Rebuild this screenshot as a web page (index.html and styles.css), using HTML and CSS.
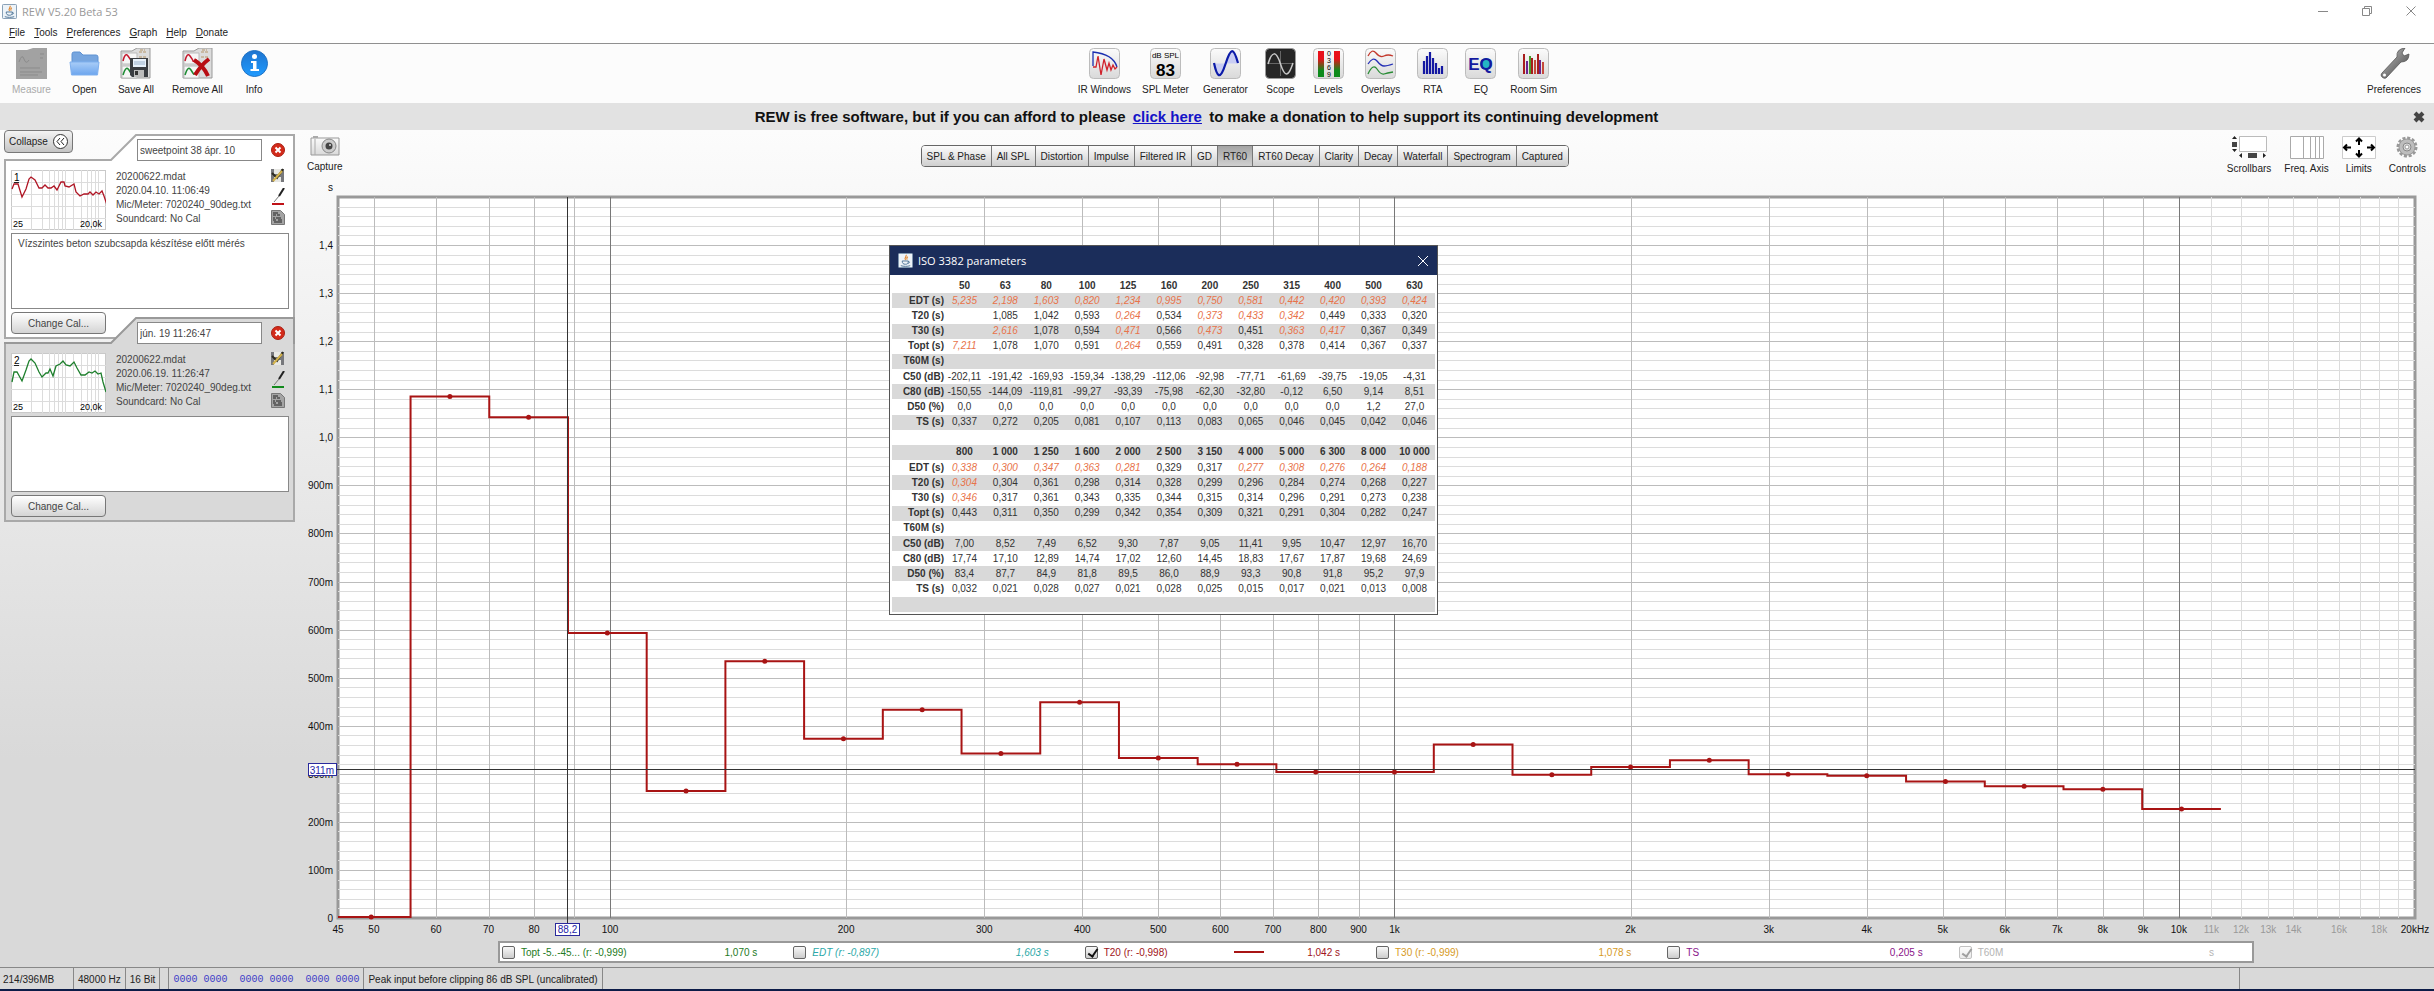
FILE: index.html
```html
<!DOCTYPE html>
<html lang="en">
<head>
    <meta charset="UTF-8">
    <meta name="viewport" content="width=device-width, initial-scale=1.0">
    <title>REW V5.20 Beta 53</title>
    <link rel="stylesheet" href="styles.css">
</head>
<body>
    <!-- shared icons -->
    <svg class="defs" width="0" height="0">
        <defs>
            <linearGradient id="gFolder" x1="0" y1="0" x2="0" y2="1"><stop offset="0" stop-color="#a9cdf7"/><stop offset="1" stop-color="#6ca5ee"/></linearGradient>
            <linearGradient id="gInfo" x1="0" y1="0" x2="0" y2="1"><stop offset="0" stop-color="#1f74cf"/><stop offset="1" stop-color="#1f9bff"/></linearGradient>
            <linearGradient id="gTile" x1="0" y1="0" x2="0" y2="1"><stop offset="0" stop-color="#fbfbfb"/><stop offset="1" stop-color="#d9d9d9"/></linearGradient>
            <linearGradient id="gLevel" x1="0" y1="0" x2="0" y2="1"><stop offset="0.3" stop-color="#e8111a"/><stop offset="0.75" stop-color="#0d8a1c"/></linearGradient>
            <linearGradient id="gMetal" x1="0" y1="0" x2="1" y2="1"><stop offset="0" stop-color="#c8c8c8"/><stop offset="1" stop-color="#3c3c3c"/></linearGradient>
            <symbol id="java" viewBox="0 0 16 16">
                <rect x="0.5" y="0.5" width="15" height="15" rx="1" fill="#edf3f8" stroke="#7f98b0"/>
                <path d="M8.5 2c1.500 2-2.500 2.500-0.500 5.500M10.500 4c-2 1.200-1 2-0.800 3" fill="none" stroke="#e0852c" stroke-width="1.200"/>
                <path d="M4.500 8.500h6.500c0 3-1 3.500-3.200 3.500s-3.300-1-3.300-3.500zM11 9c2 0 1.500 2-0.500 2M3 13.500c3 1 7 1 10 0" fill="none" stroke="#4d7396"/>
            </symbol>
            <symbol id="files" viewBox="0 0 31 31">
                <path d="M1 3h11l5-3h13v30h-29z" fill="#dcdcdc" stroke="#9a9a9a"/>
                <path d="M2 5h15v11h-15zM2 18h15v12h-15z" fill="#f6f6f6" stroke="#bbb"/>
                <path d="M19 4h8M19 9h8M20 2h5" stroke="#b5966b" stroke-dasharray="3 1"/>
                <path d="M3 13q2-9 5-5t3 5 4-1" fill="none" stroke="#c4172c" stroke-width="1.500"/>
                <path d="M3 27q3-10 6-5t3 4 4-1" fill="none" stroke="#1d8b33" stroke-width="1.500"/>
            </symbol>
            <symbol id="delete" viewBox="0 0 14 14">
                <circle cx="7" cy="7" r="6.500" fill="#d32a1a" stroke="#a91f12"/>
                <path d="M4.500 4.500l5 5M9.500 4.500l-5 5" stroke="#fff" stroke-width="2"/>
            </symbol>
            <symbol id="save" viewBox="0 0 15 15">
                <path d="M1 1h13v13h-13z" fill="#77787c"/>
                <path d="M4 1h7v5h-7zM4 9h7v5h-7z" fill="#e8e8e4"/>
                <path d="M2 5l5 5 6-9" fill="none" stroke="#2e2c22" stroke-width="2"/>
                <path d="M3 13l9-10" stroke="#d3b24a" stroke-width="2"/>
            </symbol>
            <symbol id="pen" viewBox="0 0 14 16">
                <path d="M13 0L8 8" stroke="#222" stroke-width="2"/>
                <path d="M8 8L3 14" stroke="#777"/>
            </symbol>
            <symbol id="sheet" viewBox="0 0 14 15">
                <path d="M0.500 0.500h9l4 4v10h-13z" fill="#a4a4a4" stroke="#777"/>
                <path d="M2 3h5M2 5h3M6 5h3M2 8h2M5 8h5M2 10h3M7 10h4M3 12h8" stroke="#222"/>
            </symbol>
        </defs>
    </svg>

    <div class="app">
        <header class="titlebar">
            <svg class="title-icon" viewBox="0 0 16 16"><use href="#java"/></svg>
            <span class="title-text">REW V5.20 Beta 53</span>
            <div class="window-buttons">
                <button aria-label="Minimize"><svg width="12" height="12" viewBox="0 0 12 12"><path d="M1 6.500h10"/></svg></button>
                <button aria-label="Restore"><svg width="12" height="12" viewBox="0 0 12 12"><path d="M1.500 3.500h7v7h-7zM3.500 3.500v-2h7v7h-2"/></svg></button>
                <button aria-label="Close"><svg width="12" height="12" viewBox="0 0 12 12"><path d="M1.500 1.500l9 9M10.500 1.500l-9 9"/></svg></button>
            </div>
        </header>

        <nav class="menubar">
            <button><u>F</u>ile</button>
            <button><u>T</u>ools</button>
            <button><u>P</u>references</button>
            <button><u>G</u>raph</button>
            <button><u>H</u>elp</button>
            <button><u>D</u>onate</button>
        </nav>

        <div class="toolbar">
            <div class="tool-group">
                <button class="tool" disabled>
                    <svg width="31" height="31" viewBox="0 0 31 31"><path d="M0 2h11l6-2h14v31h-31z" fill="#a2a2a2"/><path d="M3 14q3-9 5-3t5 1M4 20h20M4 24h22M4 27h18M24 6h4M24 10h3" fill="none" stroke="#8b8b8b"/></svg>
                    <span>Measure</span>
                </button>
                <button class="tool">
                    <svg width="31" height="31" viewBox="0 0 31 31"><path d="M3 16V6q0-2 2-2h6l3 3h13q2 0 2 2v7z" fill="#77a6df" stroke="#5f92d2"/><path d="M1 14h29l-1.500 13h-26z" fill="url(#gFolder)" stroke="#7fb0ee"/></svg>
                    <span>Open</span>
                </button>
                <button class="tool">
                    <svg width="31" height="31" viewBox="0 0 31 31"><use href="#files"/><path d="M10 10h18v19h-16l-2-2z" fill="#3a3d42"/><path d="M13 11h13v8h-13z" fill="#e9f2fc"/><path d="M14 14h11M14 16h11" stroke="#9cb3cc"/><path d="M14 22h10v7h-10z" fill="#bcbcbc"/><path d="M15 23h3v4h-3z" fill="#333"/></svg>
                    <span>Save All</span>
                </button>
                <button class="tool">
                    <svg width="31" height="31" viewBox="0 0 31 31"><use href="#files"/><path d="M12 12q9 5 14 16M27 11q-8 6-14 16" fill="none" stroke="#b80d13" stroke-width="4"/></svg>
                    <span>Remove All</span>
                </button>
                <button class="tool">
                    <svg width="27" height="31" viewBox="0 0 27 31"><circle cx="13.500" cy="15.500" r="13" fill="url(#gInfo)" stroke="#2273c4"/><circle cx="13.500" cy="8.500" r="2.500" fill="#fff"/><path d="M10 13h5.500v8h2.500v2h-8.500v-2h2.500v-6h-2z" fill="#fff"/></svg>
                    <span>Info</span>
                </button>
            </div>

            <div class="tool-group tool-group-tight">
                <button class="tool">
                    <svg width="31" height="31" viewBox="0 0 31 31"><rect class="tile" x="0.500" y="0.500" width="30" height="30" rx="4"/><path d="M4 18V4q20 2 24 15" fill="none" stroke="#1b2fb0" stroke-width="1.300"/><path d="M4 19h3L9 8l3 19 3-16 3 11 2-7 2 7 2-5 2 4 2-2" fill="none" stroke="#d0222c" stroke-width="1.300"/></svg>
                    <span>IR Windows</span>
                </button>
                <button class="tool">
                    <svg width="31" height="31" viewBox="0 0 31 31"><rect class="tile" x="0.500" y="0.500" width="30" height="30" rx="4"/><text class="spl-unit" x="15.500" y="10">dB SPL</text><text class="spl-value" x="15.500" y="28">83</text></svg>
                    <span>SPL Meter</span>
                </button>
                <button class="tool spaced">
                    <svg width="31" height="31" viewBox="0 0 31 31"><rect class="tile" x="0.500" y="0.500" width="30" height="30" rx="4"/><path d="M4 15.500h11.500c-3 15-8 17-11.500 0zM15.500 15.500C19 0 24-1 28 15.500z" fill="#c9cdf3"/><path d="M4 15c3 14 6 18 11.500 1s8-17 12.500-1" fill="none" stroke="#0c1ba8" stroke-width="2.200"/></svg>
                    <span>Generator</span>
                </button>
                <button class="tool spaced">
                    <svg width="31" height="31" viewBox="0 0 31 31"><rect x="0.500" y="0.500" width="30" height="30" rx="4" fill="#262626" stroke="#999"/><path d="M15.500 3v25M3 15.500h25" stroke="#666"/><path d="M3 16c4-13 8-14 12.500 0s8 13 12.500-1" fill="none" stroke="#c9c9c9" stroke-width="1.500"/></svg>
                    <span>Scope</span>
                </button>
                <button class="tool spaced">
                    <svg width="31" height="31" viewBox="0 0 31 31"><rect class="tile" x="0.500" y="0.500" width="30" height="30" rx="4"/><path d="M5 3h6v26h-6zM21 3h6v26h-6z" fill="url(#gLevel)"/><text class="level-mark" x="16" y="8">0</text><text class="level-mark" x="16" y="15">3</text><text class="level-mark" x="16" y="22">6</text><text class="level-mark" x="16" y="29">9</text></svg>
                    <span>Levels</span>
                </button>
                <button class="tool spaced">
                    <svg width="31" height="31" viewBox="0 0 31 31"><rect class="tile" x="0.500" y="0.500" width="30" height="30" rx="4"/><g fill="none" stroke-width="1.300"><path d="M3 8q4-8 8-3t8 3 9 0" stroke="#c3392d"/><path d="M3 16q5-8 9-3t7 5 9-2" stroke="#2530b5"/><path d="M3 26q5-11 9-5t7 5 9-2" stroke="#298c35"/></g></svg>
                    <span>Overlays</span>
                </button>
                <button class="tool spaced">
                    <svg width="31" height="31" viewBox="0 0 31 31"><rect class="tile" x="0.500" y="0.500" width="30" height="30" rx="4"/><path d="M7 26V13M10 26V8M13 26V4M16 26V10M19 26V15M22 26V20M25 26V18" stroke="#1418a2" stroke-width="2.200"/></svg>
                    <span>RTA</span>
                </button>
                <button class="tool spaced">
                    <svg width="31" height="31" viewBox="0 0 31 31"><rect class="tile" x="0.500" y="0.500" width="30" height="30" rx="4"/><circle cx="21" cy="16" r="6" fill="#24b5c4"/><text class="eq-mark" x="15.500" y="22">EQ</text></svg>
                    <span>EQ</span>
                </button>
                <button class="tool">
                    <svg width="31" height="31" viewBox="0 0 31 31"><rect class="tile" x="0.500" y="0.500" width="30" height="30" rx="4"/><g stroke-width="2"><path d="M6 26V6M14 26V10M20 26V6" stroke="#a81d1d"/><path d="M9 26V13M22 26V12" stroke="#6a2390"/><path d="M12 26V8" stroke="#4a9a2c"/><path d="M17 26V12M25 26V14" stroke="#c6483a"/></g></svg>
                    <span>Room Sim</span>
                </button>
            </div>

            <div class="tool-group">
                <button class="tool">
                    <svg width="31" height="31" viewBox="0 0 31 31"><path d="M3 25L18 9q-1-8 8-9l-3 5 2 3 5-2q0 8-8 8L7 30q-2 1-4-1t0-4z" fill="url(#gMetal)" stroke="#555" stroke-width="0.800"/><circle cx="5.500" cy="27" r="1.500" fill="#fff"/></svg>
                    <span>Preferences</span>
                </button>
            </div>
        </div>

        <div class="banner">
            <p>REW is free software, but if you can afford to please <a href="#donate">click here</a> to make a donation to help support its continuing development</p>
            <button class="banner-close" aria-label="Close banner"><svg width="12" height="12" viewBox="0 0 12 12"><path d="M2 2l8 8M10 2l-8 8" stroke="#444" stroke-width="4"/></svg></button>
        </div>

        <main class="workspace">
            <aside class="sidebar">
                <button class="collapse">Collapse
                    <svg width="15" height="15" viewBox="0 0 15 15"><circle cx="7.500" cy="7.500" r="7" fill="#fff" stroke="#333"/><path d="M7 4l-3 3.500 3 3.500M11 4l-3 3.500 3 3.500" fill="none" stroke="#222"/></svg>
                </button>

                <section class="measurement">
                    <svg class="tab-shape" width="291" height="27" viewBox="0 0 291 27"><path d="M1 27V26H107L132 1H290V27z" fill="#fff"/><path d="M1 27V26H107L132 1H290V27" fill="none" stroke="#a9a9a9" stroke-width="2"/></svg>
                    <div class="measurement-head">
                        <input type="text" aria-label="Measurement 1 name" value="sweetpoint 38 ápr. 10">
                        <button class="icon-button" aria-label="Remove measurement 1"><svg width="14" height="14"><use href="#delete"/></svg></button>
                    </div>
                    <div class="measurement-body">
                        <div class="info">
                            <svg class="thumb" width="95" height="60" viewBox="0 0 95 60">
                                <rect x="0.500" y="0.500" width="94" height="59" fill="#fff" stroke="#c9c9c9"/>
                                <path class="thumb-grid" d="M0 12.500h95M0 24.500h95M0 36.500h95M0 48.500h95M20.500 0v60M31.500 0v60M38.500 0v60M43.500 0v60M47.500 0v60M51.500 0v60M54.500 0v60M62.500 0v60M70.500 0v60M76.500 0v60M80.500 0v60M84.500 0v60M87.500 0v60"/>
                                <path d="M1 19l2-5h4l4 13 4-8 3-10 2-2 4 3 4 8h3l3-3 3 3h3l3-2 3 4 4-8h3l1 4 4 1 5-3 2 8 4 4 4-2 4 0 2-2 3 3 3-3 3 2 3-3 2 5 3 9" fill="none" stroke="#b01524" stroke-width="1.300"/>
                                <text class="thumb-num" x="3" y="11">1</text><path d="M3 12.500h5" stroke="#222"/>
                                <text x="2" y="57">25</text><text x="69" y="57">20,0k</text>
                            </svg>
                            <p>20200622.mdat<br>2020.04.10. 11:06:49<br>Mic/Meter: 7020240_90deg.txt<br>Soundcard: No Cal</p>
                            <div class="info-icons">
                                <button class="icon-button" aria-label="Save"><svg width="15" height="15"><use href="#save"/></svg></button>
                                <button class="icon-button" aria-label="Trace colour"><svg width="14" height="18"><use href="#pen" width="14" height="16"/><path d="M1 16h12" stroke="#c01218" stroke-width="2"/></svg></button>
                                <button class="icon-button" aria-label="Notes"><svg width="14" height="15"><use href="#sheet"/></svg></button>
                            </div>
                        </div>
                        <textarea aria-label="Notes 1">Vízszintes beton szubcsapda készítése előtt mérés</textarea>
                        <button class="change-cal">Change Cal...</button>
                    </div>
                </section>

                <section class="measurement measurement-grey">
                    <svg class="tab-shape" width="291" height="27" viewBox="0 0 291 27"><path d="M1 27V26H107L132 1H290V27z" fill="#d9d9d9"/><path d="M1 27V26H107L132 1H290V27" fill="none" stroke="#999" stroke-width="2"/></svg>
                    <div class="measurement-head">
                        <input type="text" aria-label="Measurement 2 name" value="jún. 19 11:26:47">
                        <button class="icon-button" aria-label="Remove measurement 2"><svg width="14" height="14"><use href="#delete"/></svg></button>
                    </div>
                    <div class="measurement-body">
                        <div class="info">
                            <svg class="thumb" width="95" height="60" viewBox="0 0 95 60">
                                <rect x="0.500" y="0.500" width="94" height="59" fill="#fff" stroke="#c9c9c9"/>
                                <path class="thumb-grid" d="M0 12.500h95M0 24.500h95M0 36.500h95M0 48.500h95M20.500 0v60M31.500 0v60M38.500 0v60M43.500 0v60M47.500 0v60M51.500 0v60M54.500 0v60M62.500 0v60M70.500 0v60M76.500 0v60M80.500 0v60M84.500 0v60M87.500 0v60"/>
                                <path d="M1 29l2-10h3l5 9 4-11 3-9 2-2 4 4 4 9 3 5 4-4h2l2-4 3 7 3-10 4-2 3-3 3 4 4 1 4-4 3 6 4 7 4 0 4-3 3 1 3-2 3 3 3-1 2 9 3 10" fill="none" stroke="#1d7f2c" stroke-width="1.300"/>
                                <text class="thumb-num" x="3" y="11">2</text><path d="M3 12.500h5" stroke="#222"/>
                                <text x="2" y="57">25</text><text x="69" y="57">20,0k</text>
                            </svg>
                            <p>20200622.mdat<br>2020.06.19. 11:26:47<br>Mic/Meter: 7020240_90deg.txt<br>Soundcard: No Cal</p>
                            <div class="info-icons">
                                <button class="icon-button" aria-label="Save"><svg width="15" height="15"><use href="#save"/></svg></button>
                                <button class="icon-button" aria-label="Trace colour"><svg width="14" height="18"><use href="#pen" width="14" height="16"/><path d="M1 16h12" stroke="#128a1c" stroke-width="2"/></svg></button>
                                <button class="icon-button" aria-label="Notes"><svg width="14" height="15"><use href="#sheet"/></svg></button>
                            </div>
                        </div>
                        <textarea aria-label="Notes 2"></textarea>
                        <button class="change-cal">Change Cal...</button>
                    </div>
                </section>
            </aside>

            <section class="graph">
                <div class="graph-bar">
                    <button class="tool small">
                        <svg width="30" height="22" viewBox="0 0 30 22"><path d="M1 3h28v17h-28z" fill="url(#gTile)" stroke="#999"/><path d="M3 1h5v2h-5z" fill="#aaa"/><path d="M5 4v16" stroke="#aaa"/><circle cx="19" cy="11" r="7" fill="#ccc" stroke="#888"/><circle cx="19" cy="11" r="3.500" fill="#444"/><circle cx="20" cy="10" r="1" fill="#ddd"/></svg>
                        <span>Capture</span>
                    </button>
                    <div class="tabs">
                        <button>SPL &amp; Phase</button>
                        <button>All SPL</button>
                        <button>Distortion</button>
                        <button>Impulse</button>
                        <button>Filtered IR</button>
                        <button>GD</button>
                        <button class="active">RT60</button>
                        <button>RT60 Decay</button>
                        <button>Clarity</button>
                        <button>Decay</button>
                        <button>Waterfall</button>
                        <button>Spectrogram</button>
                        <button>Captured</button>
                    </div>
                    <div class="graph-actions">
                        <button class="tool small">
                            <svg width="36" height="24" viewBox="0 0 36 24"><path d="M8.500 1.500h27v15h-27z" fill="#fff" stroke="#bbb"/><path d="M1 7h5v5h-5zM17 18h9v5h-9z" fill="#444"/><path d="M1 4l2.500-3 2.500 3zM1 14l2.500 3 2.500-3zM11 18v5l-3-2.500zM32 18v5l3-2.500z" fill="#222"/></svg>
                            <span>Scrollbars</span>
                        </button>
                        <button class="tool small">
                            <svg width="36" height="24" viewBox="0 0 36 24"><path d="M1.500 1.500h33v22h-33zM14.500 1v22M21.500 1v22M26.500 1v22M30.500 1v22" fill="#fff" stroke="#aaa"/></svg>
                            <span>Freq. Axis</span>
                        </button>
                        <button class="tool small">
                            <svg width="34" height="24" viewBox="0 0 34 24"><path d="M0.500 1.500h33v22h-33z" fill="#fff" stroke="#ccc"/><path d="M14 6.500l3-3 3 3M17 4v6M14 18.500l3 3 3-3M17 21v-6M5 9.500l-3 3 3 3M3 12.500h6M29 9.500l3 3-3 3M31 12.500h-6" fill="none" stroke="#000" stroke-width="2"/></svg>
                            <span>Limits</span>
                        </button>
                        <button class="tool small">
                            <svg width="24" height="24" viewBox="0 0 24 24"><circle cx="12" cy="12" r="9" fill="none" stroke="#999" stroke-width="3" stroke-dasharray="3 1.700"/><circle cx="12" cy="12" r="8" fill="#bdbdbd" stroke="#999"/><circle cx="12" cy="12" r="4" fill="#ddd" stroke="#888"/><circle cx="12" cy="12" r="2" fill="#fff" stroke="#999"/></svg>
                            <span>Controls</span>
                        </button>
                    </div>
                </div>

                <div class="chart"><svg id="chart"></svg></div>

                <div class="legend">
                    <div class="trace green"><input type="checkbox" id="topt"><label for="topt">Topt -5..-45... (r: -0,999)</label><output>1,070 s</output></div>
                    <div class="trace cyan"><input type="checkbox" id="edt"><label for="edt">EDT (r: -0,897)</label><output>1,603 s</output></div>
                    <div class="trace red"><input type="checkbox" id="t20" checked><label for="t20">T20 (r: -0,998)</label><i class="swatch"></i><output>1,042 s</output></div>
                    <div class="trace orange"><input type="checkbox" id="t30"><label for="t30">T30 (r: -0,999)</label><output>1,078 s</output></div>
                    <div class="trace purple"><input type="checkbox" id="ts"><label for="ts">TS</label><output>0,205 s</output></div>
                    <div class="trace off"><input type="checkbox" id="t60m" checked disabled><label for="t60m">T60M</label><output>s</output></div>
                </div>
            </section>
        </main>

        <footer class="statusbar">
            <span class="cell memory">214/396MB</span>
            <span class="cell">48000 Hz</span>
            <span class="cell">16 Bit</span>
            <span class="cell"></span>
            <span class="cell bits">0000 0000&nbsp; 0000 0000&nbsp; 0000 0000</span>
            <span class="cell">Peak input before clipping 86 dB SPL (uncalibrated)</span>
            <span class="cell filler"></span>
            <span class="corner"></span>
        </footer>
        <div class="taskbar"></div>
    </div>

    <div class="dialog" role="dialog" aria-labelledby="dialogTitle">
        <div class="dialog-title">
            <svg width="15" height="15" viewBox="0 0 16 16"><use href="#java"/></svg>
            <span id="dialogTitle">ISO 3382 parameters</span>
            <button aria-label="Close"><svg width="12" height="12" viewBox="0 0 12 12"><path d="M1 1l10 10M11 1l-10 10" stroke="#fff"/></svg></button>
        </div>
        <table class="params"><tbody id="params"></tbody></table>
    </div>

    <script src="script.js"></script>
</body>
</html>
```

FILE: styles.css
```css
* {
    box-sizing: border-box;
}
body {
    margin: 0;
    font-family: "Liberation Sans", Arial, sans-serif;
    font-size: 10px;
    color: #222;
    background: #d9d9d9;
}
button {
    font: inherit;
    color: inherit;
    background: none;
    border: 0;
    padding: 0;
}
svg {
    display: block;
}
.defs {
    position: absolute;
}
.app {
    display: flex;
    flex-direction: column;
    height: 100vh;
}

/* window frame */
.titlebar {
    display: flex;
    align-items: center;
    height: 22px;
    padding: 0 17px 0 2px;
    background: #fff;
}
.title-icon {
    width: 15px;
    height: 15px;
}
.title-text {
    margin-left: 5px;
    font-family: "Open Sans", sans-serif;
    font-size: 11px;
    color: #999;
}
.window-buttons {
    display: flex;
    gap: 32px;
    margin-left: auto;
}
.window-buttons svg {
    fill: none;
    stroke: #888;
}
.menubar {
    display: flex;
    gap: 9px;
    height: 22px;
    padding: 0 9px 1px;
    background: #fff;
    border-bottom: 1px solid #909090;
}

/* toolbar */
.toolbar {
    display: flex;
    justify-content: space-between;
    height: 59px;
    padding: 4px 13px 0 12px;
    background: #fcfcfc;
}
.tool-group {
    display: flex;
    align-items: flex-start;
    gap: 18px;
}
.tool-group-tight {
    gap: 11px;
}
.tool {
    display: flex;
    flex-direction: column;
    align-items: center;
    gap: 5px;
    line-height: 12px;
}
.tool:disabled {
    color: #aaa;
}
.spaced {
    padding: 0 3px;
}
.small {
    gap: 4px;
}
.tile {
    fill: url(#gTile);
    stroke: #bcbcbc;
}
.spl-unit {
    font-size: 8px;
    text-anchor: middle;
}
.spl-value {
    font-size: 17px;
    font-weight: bold;
    text-anchor: middle;
}
.level-mark {
    font-size: 7px;
    text-anchor: middle;
}
.eq-mark {
    font-size: 17px;
    font-weight: bold;
    text-anchor: middle;
    fill: #141aa0;
}

.banner {
    display: flex;
    align-items: center;
    height: 27px;
    padding: 0 9px 0 0;
    background: #e2e2e2;
}
.banner p {
    flex: 1;
    margin: 0;
    font-size: 15px;
    font-weight: bold;
    text-align: center;
    color: #111;
}
.banner a {
    margin: 0 3px;
    color: #1414c8;
}

/* workspace */
.workspace {
    display: flex;
    flex: 1;
    min-height: 0;
    background: linear-gradient(#fcfcfc, #d9d9d9 75%);
}
.sidebar {
    width: 297px;
    padding: 0 2px 0 4px;
}
.collapse {
    display: flex;
    align-items: center;
    gap: 5px;
    width: 69px;
    height: 23px;
    padding: 0 4px;
    border: 1px solid #777;
    border-radius: 4px;
    background: linear-gradient(#f4f4f4, #c4c4c4);
}
.measurement {
    position: relative;
    width: 291px;
    margin-top: -22px;
    color: #444;
}
.collapse + .measurement {
    margin-top: -19px;
}
.tab-shape {
    position: absolute;
    inset: 0 auto auto 0;
}
.measurement-head {
    position: relative;
    display: flex;
    align-items: center;
    gap: 9px;
    height: 27px;
    padding: 5px 10px 0 133px;
}
.measurement-head input {
    width: 125px;
    height: 22px;
    padding: 0 2px;
    font: inherit;
    color: inherit;
    border: 1px solid #888;
}
.measurement-head input,
.measurement-body textarea {
    background: #fff;
    outline: 0;
}
.measurement-body {
    padding: 9px 4px 3px 5px;
    background: #fff;
    border: 2px solid #a9a9a9;
    border-top: 0;
}
.measurement-grey .measurement-body {
    background: #d9d9d9;
}
.info {
    display: flex;
    height: 63px;
}
.info p {
    flex: 1;
    margin: 0 0 0 10px;
    line-height: 14px;
    white-space: nowrap;
}
.info-icons {
    display: flex;
    flex-direction: column;
    align-items: center;
    justify-content: space-between;
    height: 57px;
    margin: -2px 4px 0 0;
}
.thumb {
    font-size: 9px;
}
.thumb-grid {
    stroke: #dcdcdc;
}
.thumb-num {
    font-size: 10px;
}
.measurement textarea {
    display: block;
    width: 100%;
    height: 76px;
    padding: 4px 6px;
    font: inherit;
    color: inherit;
    border: 1px solid #888;
    border-radius: 0;
    resize: none;
}
.change-cal {
    display: block;
    width: 95px;
    height: 22px;
    margin-top: 3px;
    border: 1px solid #777;
    border-radius: 4px;
    background: linear-gradient(#fff, #d4d4d4);
}

/* graph */
.graph {
    display: flex;
    flex: 1;
    flex-direction: column;
    min-width: 0;
}
.graph-bar {
    display: flex;
    align-items: flex-start;
    height: 48px;
    padding: 5px 8px 0 10px;
}
.tabs {
    display: flex;
    height: 22px;
    margin: 10px auto 0 578px;
    border: 1px solid #666;
    border-radius: 4px;
    overflow: hidden;
}
.tabs button {
    padding: 0 5px;
    background: linear-gradient(#fcfcfc, #cfcfcf);
    border-left: 1px solid #777;
}
.tabs button:first-child {
    border-left: 0;
}
.tabs .active {
    background: linear-gradient(#a4a4a4, #d0d0d0);
}
.graph-actions {
    display: flex;
    gap: 13px;
}
.chart {
    flex: 1;
    min-height: 0;
}
.chart svg {
    width: 100%;
    height: 100%;
}
.chart text {
    fill: #111;
}
.chart .dim {
    fill: #999;
}
.plot-area {
    fill: #fff;
    stroke: #999;
    stroke-width: 3;
}
.grid-minor {
    stroke: #dcdcdc;
}
.grid-major {
    stroke: #bcbcbc;
}
.grid-decade {
    stroke: #787878;
}
.cursor-line {
    stroke: #333;
    stroke-width: 1;
}
.cursor-box {
    fill: #fff;
    stroke: #2a2a9c;
}
.chart .cursor-text {
    fill: #2424a8;
}
.t20-line {
    fill: none;
    stroke: #a81414;
    stroke-width: 2;
}
.t20-dot {
    fill: #a81414;
}

.legend {
    display: grid;
    grid-template-columns: repeat(6, 1fr);
    height: 22px;
    margin: 0 180px 4px 201px;
    padding: 0 2px;
    background: #fff;
    border: 2px solid #999;
}
.trace {
    display: flex;
    align-items: center;
    padding-right: 36px;
}
.trace input {
    appearance: none;
    width: 13px;
    height: 13px;
    margin: 0 6px 0 0;
    border: 1px solid #666;
    border-radius: 2px;
    background: linear-gradient(#f8f8f8, #ccc);
}
.trace input:checked::before {
    content: "";
    display: block;
    width: 4px;
    height: 8px;
    margin: 0 0 0 4px;
    border: solid #111;
    border-width: 0 2px 2px 0;
    transform: rotate(35deg);
}
.trace input:disabled {
    opacity: 0.4;
}
.trace output {
    margin-left: auto;
}
.swatch {
    width: 30px;
    height: 2px;
    margin-left: 66px;
    background: #a81414;
}
.green { color: #237a23; }
.cyan { color: #2ba8a8; font-style: italic; }
.red { color: #a01420; }
.orange { color: #d69a24; }
.purple { color: #8a148a; }
.off { color: #b4b4b4; }

/* status bar */
.statusbar {
    display: flex;
    align-items: center;
    height: 22px;
    line-height: 23px;
    border-top: 1px solid #888;
    background: #d9d9d9;
}
.cell {
    height: 21px;
    padding: 0 4px;
    border-right: 1px solid #888;
    white-space: nowrap;
}
.memory {
    width: 74px;
    padding-left: 3px;
}
.bits {
    font-family: "Liberation Mono", monospace;
    color: #3c3cc8;
}
.filler {
    flex: 1;
}
.corner {
    width: 194px;
}
.taskbar {
    height: 2px;
    background: #0c1c48;
}

/* ISO 3382 window */
.dialog {
    position: absolute;
    left: 889px;
    top: 245px;
    width: 549px;
    padding: 0 2px 2px;
    background: #fff;
    border: 1px solid #555;
}
.dialog-title {
    display: flex;
    align-items: center;
    gap: 5px;
    height: 29px;
    margin: 0 -2px 3px;
    padding: 0 8px;
    font-family: "Open Sans", sans-serif;
    font-size: 11px;
    color: #fff;
    background: #1b2d5a;
}
.dialog-title button {
    margin-left: auto;
}
.params {
    width: 100%;
    height: 334px;
    border-collapse: collapse;
    table-layout: fixed;
    color: #333;
}
.params th,
.params td {
    padding: 0;
    line-height: 12px;
    text-align: center;
    white-space: nowrap;
}
.params th:first-child {
    width: 52px;
    text-align: right;
}
.params tr:nth-child(even) {
    background: #d9d9d9;
}
.params .poor {
    font-style: italic;
    color: #e8734a;
}
```

FILE: script.js
```js
// values marked with * have a poor correlation
const bands = [
    {
        freqs: '50 63 80 100 125 160 200 250 315 400 500 630',
        rows: {
            'EDT (s)': '5,235* 2,198* 1,603* 0,820* 1,234* 0,995* 0,750* 0,581* 0,442* 0,420* 0,393* 0,424*',
            'T20 (s)': '- 1,085 1,042 0,593 0,264* 0,534 0,373* 0,433* 0,342* 0,449 0,333 0,320',
            'T30 (s)': '- 2,616* 1,078 0,594 0,471* 0,566 0,473* 0,451 0,363* 0,417* 0,367 0,349',
            'Topt (s)': '7,211* 1,078 1,070 0,591 0,264* 0,559 0,491 0,328 0,378 0,414 0,367 0,337',
            'T60M (s)': '- - - - - - - - - - - -',
            'C50 (dB)': '-202,11 -191,42 -169,93 -159,34 -138,29 -112,06 -92,98 -77,71 -61,69 -39,75 -19,05 -4,31',
            'C80 (dB)': '-150,55 -144,09 -119,81 -99,27 -93,39 -75,98 -62,30 -32,80 -0,12 6,50 9,14 8,51',
            'D50 (%)': '0,0 0,0 0,0 0,0 0,0 0,0 0,0 0,0 0,0 0,0 1,2 27,0',
            'TS (s)': '0,337 0,272 0,205 0,081 0,107 0,113 0,083 0,065 0,046 0,045 0,042 0,046'
        }
    },
    {
        freqs: '800 1_000 1_250 1_600 2_000 2_500 3_150 4_000 5_000 6_300 8_000 10_000',
        rows: {
            'EDT (s)': '0,338* 0,300* 0,347* 0,363* 0,281* 0,329 0,317 0,277* 0,308* 0,276* 0,264* 0,188*',
            'T20 (s)': '0,304* 0,304 0,361 0,298 0,314 0,328 0,299 0,296 0,284 0,274 0,268 0,227',
            'T30 (s)': '0,346* 0,317 0,361 0,343 0,335 0,344 0,315 0,314 0,296 0,291 0,273 0,238',
            'Topt (s)': '0,443 0,311 0,350 0,299 0,342 0,354 0,309 0,321 0,291 0,304 0,282 0,247',
            'T60M (s)': '- - - - - - - - - - - -',
            'C50 (dB)': '7,00 8,52 7,49 6,52 9,30 7,87 9,05 11,41 9,95 10,47 12,97 16,70',
            'C80 (dB)': '17,74 17,10 12,89 14,74 17,02 12,60 14,45 18,83 17,67 17,87 19,68 24,69',
            'D50 (%)': '83,4 87,7 84,9 81,8 89,5 86,0 88,9 93,3 90,8 91,8 95,2 97,9',
            'TS (s)': '0,032 0,021 0,028 0,027 0,021 0,028 0,025 0,015 0,017 0,021 0,013 0,008'
        }
    }
];

function fillTable() {
    let html = '';
    bands.forEach(band => {
        html += '<tr><th></th>' + band.freqs.split(' ').map(f => `<th>${f.replace('_', '&nbsp;')}</th>`).join('') + '</tr>';
        for (const name in band.rows) {
            html += `<tr><th>${name}</th>` + band.rows[name].split(' ').map(v => {
                if (v === '-') return '<td></td>';
                return v.endsWith('*') ? `<td class="poor">${v.slice(0, -1)}</td>` : `<td>${v}</td>`;
            }).join('') + '</tr>';
        }
        html += '<tr><th>&nbsp;</th><td colspan="12"></td></tr>';
    });
    document.getElementById('params').innerHTML = html;
}

const FMIN = 45, FMAX = 20000, YMAX = 1.5;

function drawChart() {
    const svg = document.getElementById('chart');
    const w = svg.clientWidth, h = svg.clientHeight;
    const left = 41, right = w - 19, top = 19, bottom = h - 23;
    const x = f => left + (right - left) * Math.log10(f / FMIN) / Math.log10(FMAX / FMIN);
    const y = v => bottom - (bottom - top) * v / YMAX;
    const snap = n => Math.round(n) + 0.5;
    let out = `<rect class="plot-area" x="${left}" y="${top}" width="${right - left}" height="${bottom - top}"/>`;

    const hline = (v, cls) => `<path class="${cls}" d="M${left} ${snap(y(v))}H${right}"/>`;
    const vline = (f, cls) => `<path class="${cls}" d="M${snap(x(f))} ${top}V${bottom}"/>`;
    const label = (tx, ty, anchor, text, cls = '') => `<text class="${cls}" x="${tx}" y="${ty}" text-anchor="${anchor}">${text}</text>`;

    for (let i = 1; i < 75; i++) {
        if (i % 5) out += hline(i / 50, 'grid-minor');
    }
    for (let i = 0; i < 15; i++) {
        if (i) out += hline(i / 10, 'grid-major');
        const text = i === 0 ? '0' : i < 10 ? `${i}00m` : `1,${i - 10}`;
        out += label(left - 5, y(i / 10) + 4, 'end', text);
    }
    out += label(left - 5, top - 6, 'end', 's');

    [10, 100, 1000].forEach(d => {
        for (let k = 1; k < 10; k++) {
            const f = k * d;
            if (f > FMIN) out += vline(f, k === 1 ? 'grid-decade' : 'grid-major');
        }
    });
    out += vline(10000, 'grid-decade');
    for (let k = 11; k < 20; k++) out += vline(k * 1000, 'grid-minor');

    const ticks = [45, 50, 60, 70, 80, 100, 200, 300, 400, 500, 600, 700, 800, 900];
    ticks.forEach(f => out += label(x(f), bottom + 15, 'middle', f));
    for (let k = 1; k <= 10; k++) out += label(x(k * 1000), bottom + 15, 'middle', k + 'k');
    [11, 12, 13, 14, 16, 18].forEach(k => out += label(x(k * 1000), bottom + 15, 'middle', k + 'k', 'dim'));
    out += label(right, bottom + 15, 'middle', '20kHz');

    // T20 in third octaves
    const t20 = bands.flatMap(b => b.rows['T20 (s)'].split(' ')).map(v => parseFloat(v.replace(',', '.')) || 0.002);
    const half = Math.pow(2, 1 / 6);
    let path = `M${left} ${y(t20[0])}`, dots = '';
    t20.forEach((v, i) => {
        const f = 1000 * Math.pow(2, (i - 13) / 3);
        if (i) path += `V${y(v)}`;
        path += `H${x(f * half)}`;
        dots += `<circle class="t20-dot" cx="${x(f)}" cy="${y(v)}" r="2.5"/>`;
    });
    out += `<path class="t20-line" d="${path}"/>${dots}`;

    // cursor
    const cx = snap(x(88.2)), cy = snap(y(0.311));
    out += `<path class="cursor-line" d="M${cx} ${top}V${bottom + 5}M${left - 1} ${cy}H${right}"/>`;
    out += `<rect class="cursor-box" x="${cx - 12}" y="${bottom + 5.5}" width="24" height="12"/>` + label(cx, bottom + 15, 'middle', '88,2', 'cursor-text');
    out += `<rect class="cursor-box" x="${left - 29.5}" y="${cy - 6}" width="28" height="12"/>` + label(left - 4, cy + 4, 'end', '311m', 'cursor-text');

    svg.innerHTML = out;
}

fillTable();
drawChart();
window.addEventListener('resize', drawChart);
```
